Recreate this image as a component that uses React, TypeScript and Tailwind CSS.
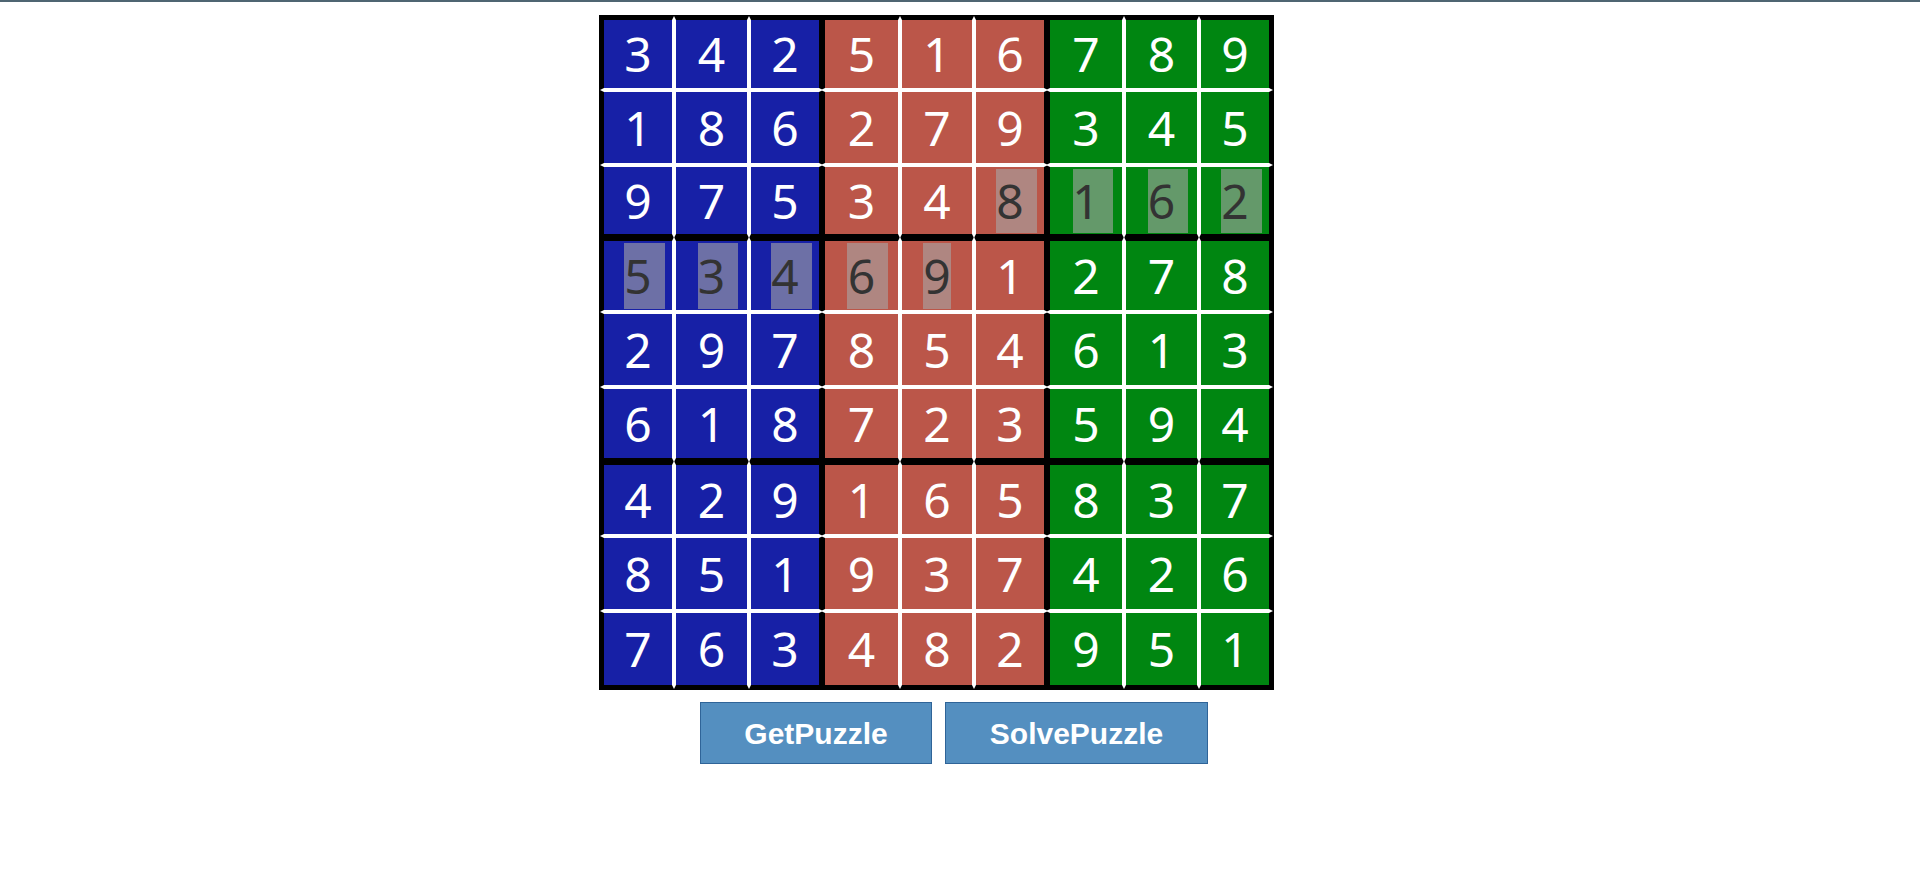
const board = [
  [3, 4, 2, 5, 1, 6, 7, 8, 9],
  [1, 8, 6, 2, 7, 9, 3, 4, 5],
  [9, 7, 5, 3, 4, 8, 1, 6, 2],
  [5, 3, 4, 6, 9, 1, 2, 7, 8],
  [2, 9, 7, 8, 5, 4, 6, 1, 3],
  [6, 1, 8, 7, 2, 3, 5, 9, 4],
  [4, 2, 9, 1, 6, 5, 8, 3, 7],
  [8, 5, 1, 9, 3, 7, 4, 2, 6],
  [7, 6, 3, 4, 8, 2, 9, 5, 1],
];

// cells filled in by the solver (row-col) -> grey box behind the digit
const solved: Record<string, { left: number; width: number }> = {
  "2-5": { left: 20, width: 41 },
  "2-6": { left: 23, width: 40 },
  "2-7": { left: 22, width: 40 },
  "2-8": { left: 20, width: 41 },
  "3-0": { left: 20, width: 41 },
  "3-1": { left: 22, width: 40 },
  "3-2": { left: 20, width: 41 },
  "3-3": { left: 22, width: 41 },
  "3-4": { left: 21, width: 28 },
};

const boxColors = ["bg-[#1720a6]", "bg-[#bb5649]", "bg-[#008611]"];
const colSizes = [
  [68, 71, 68],
  [73, 70, 68],
  [72, 71, 68],
];
const rowSizes = [
  [68, 71, 67],
  [69, 71, 69],
  [69, 71, 72],
];
const boxCols = [
  "grid-cols-[68px_71px_68px]",
  "grid-cols-[73px_70px_68px]",
  "grid-cols-[72px_71px_68px]",
];
const boxRows = [
  "grid-rows-[68px_71px_67px]",
  "grid-rows-[69px_71px_69px]",
  "grid-rows-[69px_71px_72px]",
];

function Cell({ r, c }: { r: number; c: number }) {
  const mark = solved[`${r}-${c}`];
  return (
    <div className={`relative flex items-center justify-center ${boxColors[Math.floor(c / 3)]}`}>
      {mark && (
        <div
          className="absolute top-[2px] bottom-[1px] bg-[rgba(166,166,166,0.6)]"
          style={{ left: mark.left, width: mark.width }}
        />
      )}
      <span
        className={`relative text-[48px] leading-none ${mark ? "text-[#333]" : "text-white"}`}
        style={{ fontFamily: '"Noto Sans", "Open Sans", sans-serif' }}
      >
        {board[r][c]}
      </span>
    </div>
  );
}

// little white points where the inner lines run into the black border
function Tips({ br, bc }: { br: number; bc: number }) {
  const rows = rowSizes[br];
  const cols = colSizes[bc];
  const ys = [rows[0], rows[0] + 4 + rows[1]];
  const xs = [cols[0], cols[0] + 4 + cols[1]];
  return (
    <>
      {ys.map((y) => (
        <div key={`l${y}`}>
          <div
            className="absolute -left-[4px] h-0 w-0 border-y-[2px] border-r-[4px] border-y-transparent border-r-white"
            style={{ top: y }}
          />
          <div
            className="absolute -right-[4px] h-0 w-0 border-y-[2px] border-l-[4px] border-y-transparent border-l-white"
            style={{ top: y }}
          />
        </div>
      ))}
      {xs.map((x) => (
        <div key={`t${x}`}>
          <div
            className="absolute -top-[4px] h-0 w-0 border-x-[2px] border-b-[4px] border-x-transparent border-b-white"
            style={{ left: x }}
          />
          <div
            className="absolute -bottom-[4px] h-0 w-0 border-x-[2px] border-t-[4px] border-x-transparent border-t-white"
            style={{ left: x }}
          />
        </div>
      ))}
    </>
  );
}

function Box({ br, bc }: { br: number; bc: number }) {
  const cells = [];
  for (let i = 0; i < 3; i++) {
    for (let j = 0; j < 3; j++) {
      cells.push(<Cell key={`${i}-${j}`} r={br * 3 + i} c={bc * 3 + j} />);
    }
  }
  return (
    <div className={`relative grid gap-[4px] bg-white ${boxCols[bc]} ${boxRows[br]}`}>
      {cells}
      <Tips br={br} bc={bc} />
    </div>
  );
}

export default function App() {
  return (
    <div className="min-h-[892px] bg-white">
      <div className="h-[2px] bg-[#4f6572]" />
      <div className="pl-[599px] pt-[13px]">
        <div className="inline-grid grid-cols-[215px_219px_219px] grid-rows-[214px_217px_220px] gap-x-[6px] gap-y-[7px] border-[5px] border-black bg-black">
          {[0, 1, 2].map((br) => [0, 1, 2].map((bc) => <Box key={`${br}-${bc}`} br={br} bc={bc} />))}
        </div>
        <div
          className="mt-[12px] flex gap-[13px] pl-[101px]"
          style={{ fontFamily: '"Liberation Sans", Arial, sans-serif' }}
        >
          <button className="h-[62px] w-[232px] border border-[#2f6498] bg-[#548fc0] text-[30px] font-bold text-white">
            GetPuzzle
          </button>
          <button className="h-[62px] w-[263px] border border-[#2f6498] bg-[#548fc0] text-[30px] font-bold text-white">
            SolvePuzzle
          </button>
        </div>
      </div>
    </div>
  );
}
